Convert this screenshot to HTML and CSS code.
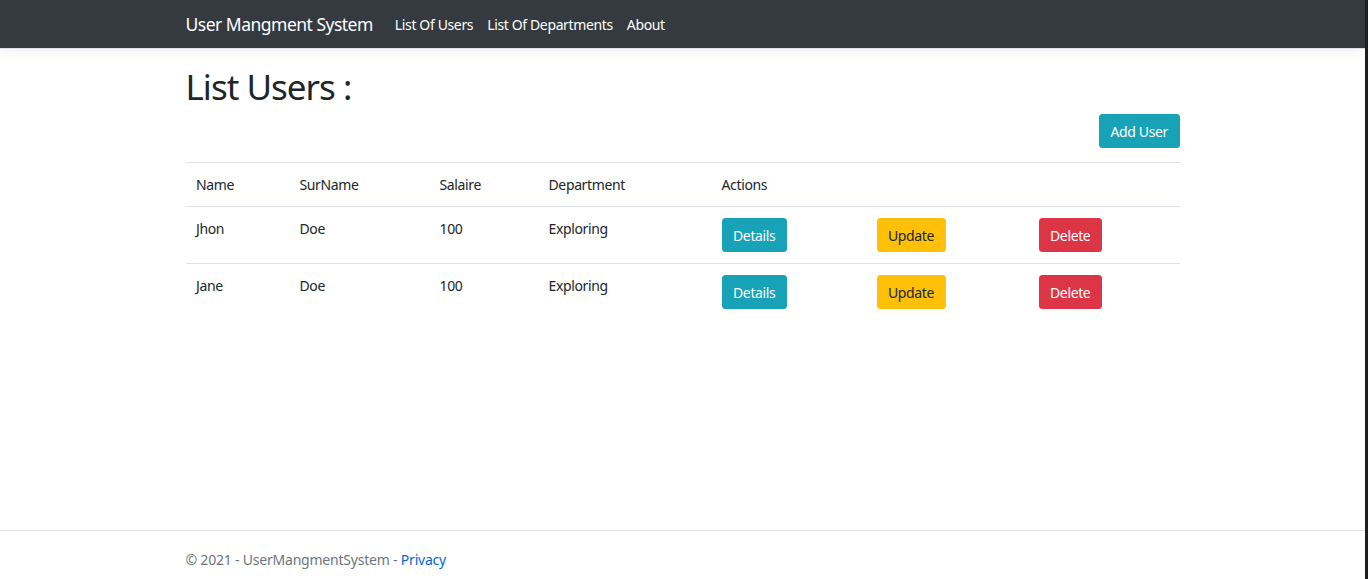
FILE: index.html
```html
<!DOCTYPE html>
<html lang="en">
<head>
<meta charset="utf-8">
<title>List Users - UserMangmentSystem</title>
<link rel="stylesheet" href="styles.css">
</head>
<body>
<header class="navbar">
  <div class="container nav-inner">
    <a class="brand" href="#">User Mangment System</a>
    <nav class="nav-links">
      <a class="nav-link" href="#">List Of Users</a>
      <a class="nav-link" href="#">List Of Departments</a>
      <a class="nav-link" href="#">About</a>
    </nav>
  </div>
</header>
<main class="main">
  <div class="container">
    <h1 class="title">List Users :</h1>
    <div class="toolbar">
      <a class="btn btn-info" href="#">Add User</a>
    </div>
    <table class="table">
      <colgroup>
        <col class="c-name"><col class="c-surname"><col class="c-salaire"><col class="c-dept"><col class="c-details"><col class="c-update"><col class="c-delete">
      </colgroup>
      <thead>
        <tr><th>Name</th><th>SurName</th><th>Salaire</th><th>Department</th><th>Actions</th><th></th><th></th></tr>
      </thead>
      <tbody>
        <tr>
          <td>Jhon</td><td>Doe</td><td>100</td><td>Exploring</td>
          <td><a class="btn btn-info" href="#">Details</a></td>
          <td><a class="btn btn-warning" href="#">Update</a></td>
          <td><a class="btn btn-danger" href="#">Delete</a></td>
        </tr>
        <tr>
          <td>Jane</td><td>Doe</td><td>100</td><td>Exploring</td>
          <td><a class="btn btn-info" href="#">Details</a></td>
          <td><a class="btn btn-warning" href="#">Update</a></td>
          <td><a class="btn btn-danger" href="#">Delete</a></td>
        </tr>
      </tbody>
    </table>
  </div>
</main>
<footer class="footer">
  <div class="container">&copy; 2021 - UserMangmentSystem - <a class="link" href="#">Privacy</a></div>
</footer>
</body>
</html>
```

FILE: styles.css
```css
html {
  background: #1e1e1e;
  height: 100%;
}
body {
  margin: 0 3px 0 0;
  min-height: 100%;
  background: #fff;
  font-family: "Noto Sans", "Open Sans", sans-serif;
  font-size: 14px;
  line-height: 1.5;
  letter-spacing: -0.026em;
  color: #212529;
  display: flex;
  flex-direction: column;
  overflow: hidden;
}
a { text-decoration: none; }
.container {
  width: 994px;
  margin: 0 auto;
  padding: 0;
}
.navbar {
  background: #343a40;
  border-bottom: 1px solid #dee2e6;
  box-shadow: 0 4px 12px rgba(0, 0, 0, .05);
  height: 49px;
  box-sizing: border-box;
}
.nav-inner {
  display: flex;
  align-items: center;
  height: 100%;
}
.brand {
  color: #fff;
  font-size: 17.5px;
  letter-spacing: -0.029em;
  margin-right: 15px;
  line-height: 26px;
}
.nav-links { display: flex; }
.nav-link {
  color: #fff;
  padding: 0 7px;
  font-size: 14px;
  line-height: 21px;
}
.main {
  flex: 1;
  padding-top: 17px;
}
.title {
  font-size: 35px;
  font-weight: 400;
  letter-spacing: -0.028em;
  line-height: 1.2;
  margin: 0 0 6px;
}
.toolbar {
  display: flex;
  justify-content: flex-end;
  margin-bottom: 14px;
}
.btn {
  display: inline-block;
  vertical-align: top;
  padding: 5.5px 10.5px;
  border: 1px solid transparent;
  border-radius: 3.5px;
  font-size: 14px;
  line-height: 21px;
}
.btn-info { background: #17a2b8; color: #fff; }
.btn-warning { background: #ffc107; color: #212529; }
.btn-danger { background: #dc3545; color: #fff; }
.table {
  width: 100%;
  border-collapse: collapse;
  table-layout: fixed;
}
.c-name { width: 103.5px; }
.c-surname { width: 140px; }
.c-salaire { width: 109px; }
.c-dept { width: 173px; }
.c-details { width: 155px; }
.c-update { width: 162px; }
.c-delete { width: 151.5px; }
.table th, .table td {
  padding: 11px 10.5px;
  border-top: 1px solid #dee2e6;
  text-align: left;
  vertical-align: top;
  font-weight: 400;
  line-height: 21px;
}
.table thead th { border-bottom: 1px solid #dee2e6; }
.table tbody tr:first-child td { border-top: 0; }
.footer {
  border-top: 1px solid #dee2e6;
  color: #6c757d;
  height: 48px;
  line-height: 57px;
  letter-spacing: -0.015em;
  white-space: nowrap;
  overflow: hidden;
}
.link { color: #0366d6; }
```
